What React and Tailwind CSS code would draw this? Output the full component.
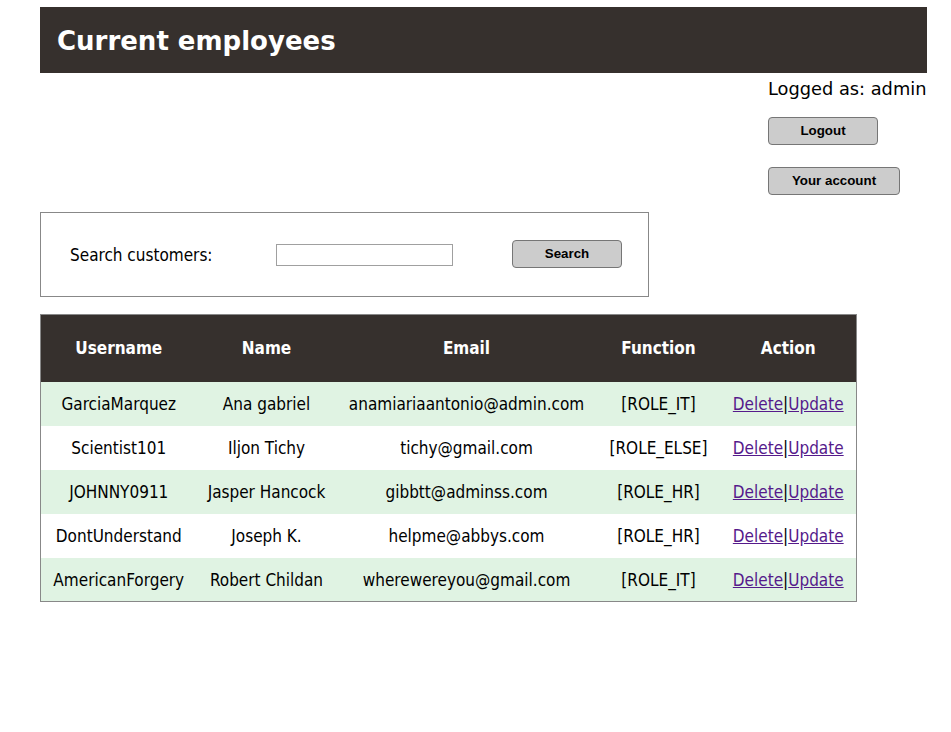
import React from 'react';

const employees = [
  { username: 'GarciaMarquez', name: 'Ana gabriel', email: 'anamiariaantonio@admin.com', role: '[ROLE_IT]' },
  { username: 'Scientist101', name: 'Iljon Tichy', email: 'tichy@gmail.com', role: '[ROLE_ELSE]' },
  { username: 'JOHNNY0911', name: 'Jasper Hancock', email: 'gibbtt@adminss.com', role: '[ROLE_HR]' },
  { username: 'DontUnderstand', name: 'Joseph K.', email: 'helpme@abbys.com', role: '[ROLE_HR]' },
  { username: 'AmericanForgery', name: 'Robert Childan', email: 'wherewereyou@gmail.com', role: '[ROLE_IT]' },
];

const btn =
  "h-[28px] bg-[#cccccc] border border-[#767676] rounded-[4px] text-[13.33px] font-bold text-black font-['Liberation_Sans',Arial,sans-serif]";

const App = () => {
  return (
    <div className="min-h-[732px] bg-white pl-[40px] pr-[24px] pt-[7px] font-['DejaVu_Sans',Verdana,sans-serif] text-black">
      {/* Titre */}
      <div className="h-[66px] bg-[#36302d] flex items-center px-[17px]">
        <h1 className="text-white font-bold text-[26px] mt-[2px]">Current employees</h1>
      </div>

      {/* Utilisateur */}
      <div className="flex justify-end">
        <div className="w-[159px] pt-[6px]">
          <p className="text-[17.8px] leading-[20px] whitespace-nowrap">Logged as: admin</p>
          <button className={`${btn} w-[110px] mt-[18px] block`}>Logout</button>
          <button className={`${btn} w-[132px] mt-[22px] block`}>Your account</button>
        </div>
      </div>

      {/* Recherche */}
      <div className="mt-[17px] w-[609px] h-[85px] border border-[#888888] flex items-center pl-[29px] font-['DejaVu_Sans_Condensed','DejaVu_Sans',sans-serif]">
        <span className="text-[17px] w-[206px] mt-[2px]">Search customers:</span>
        <input type="text" className="w-[177px] h-[22px] border border-[#a0a0a0] bg-white" />
        <button className={`${btn} w-[110px] ml-[59px] mt-[-2px]`}>Search</button>
      </div>

      {/* Tableau */}
      <table className="mt-[17px] w-[817px] border border-[#888888] border-collapse text-center font-['DejaVu_Sans_Condensed','DejaVu_Sans',sans-serif] text-[17px]">
        <thead>
          <tr className="h-[67px] bg-[#36302d] text-white font-bold">
            <th className="w-[156px]">Username</th>
            <th className="w-[140px]">Name</th>
            <th className="w-[260px]">Email</th>
            <th className="w-[124px]">Function</th>
            <th className="w-[136px]">Action</th>
          </tr>
        </thead>
        <tbody>
          {employees.map((e, i) => (
            <tr key={e.username} className={`h-[44px] ${i % 2 === 0 ? 'bg-[#e0f3e3]' : 'bg-white'}`}>
              <td className="pt-[2px]">{e.username}</td>
              <td className="pt-[2px]">{e.name}</td>
              <td className="pt-[2px]">{e.email}</td>
              <td className="pt-[2px]">{e.role}</td>
              <td className="pt-[2px]">
                <a href="#" className="underline text-[#551a8b]">Delete</a>|<a href="#" className="underline text-[#551a8b]">Update</a>
              </td>
            </tr>
          ))}
        </tbody>
      </table>
    </div>
  );
};

export default App;
